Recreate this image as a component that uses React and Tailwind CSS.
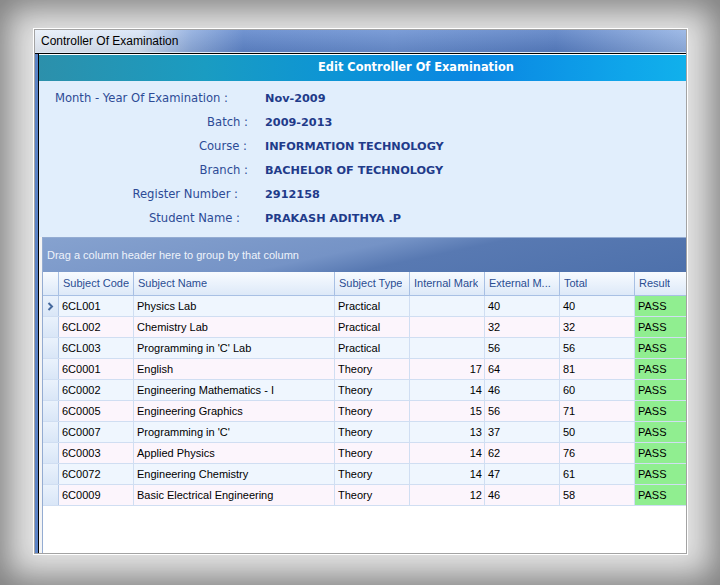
const info = [
  { label: "Month - Year Of Examination :", value: "Nov-2009", pr: "pr-[37px]" },
  { label: "Batch :", value: "2009-2013", pr: "pr-[17px]" },
  { label: "Course :", value: "INFORMATION TECHNOLOGY", pr: "pr-[18px]" },
  { label: "Branch :", value: "BACHELOR OF TECHNOLOGY", pr: "pr-[17px]" },
  { label: "Register Number :", value: "2912158", pr: "pr-[27px]" },
  { label: "Student Name :", value: "PRAKASH ADITHYA .P", pr: "pr-[25px]" },
];

const rows = [
  ["6CL001", "Physics Lab", "Practical", "", "40", "40"],
  ["6CL002", "Chemistry Lab", "Practical", "", "32", "32"],
  ["6CL003", "Programming in 'C' Lab", "Practical", "", "56", "56"],
  ["6C0001", "English", "Theory", "17", "64", "81"],
  ["6C0002", "Engineering Mathematics - I", "Theory", "14", "46", "60"],
  ["6C0005", "Engineering Graphics", "Theory", "15", "56", "71"],
  ["6C0007", "Programming in 'C'", "Theory", "13", "37", "50"],
  ["6C0003", "Applied Physics", "Theory", "14", "62", "76"],
  ["6C0072", "Engineering Chemistry", "Theory", "14", "47", "61"],
  ["6C0009", "Basic Electrical Engineering", "Theory", "12", "46", "58"],
];

const headers = ["Subject Code", "Subject Name", "Subject Type", "Internal Mark", "External Mark", "Total", "Result"];

const cols = "grid grid-cols-[16px_75px_201px_75px_75px_75px_75px_75px]";

function Chevron() {
  return (
    <svg width="7" height="9" viewBox="0 0 7 9">
      <path d="M1.5 1 L5 4.5 L1.5 8" stroke="#46699d" strokeWidth="2" fill="none" />
    </svg>
  );
}

export default function App() {
  return (
    <div className="w-[720px] h-[585px] bg-[#e3e3e3] shadow-[inset_0_0_32px_8px_rgba(0,0,0,0.45)] pt-[28px] pl-[33px] font-['Liberation_Sans',Arial,sans-serif]">
      <div className="w-[655px] h-[527px] border border-white">
        <div className="h-full border border-[#a3a3a3] flex flex-col overflow-hidden bg-white">
          {/* title bar */}
          <div className="h-[22px] shrink-0 flex items-center pl-[6px] text-[12px] text-black bg-[linear-gradient(to_bottom,rgba(255,255,255,0.12),rgba(0,0,0,0.08)),linear-gradient(to_right,#e9f0fa_0%,#d9e5f6_16%,#8eacde_24%,#5f86cb_32%,#6a90d2_55%,#587fc4_80%,#93b2e4_100%)]">
            Controller Of Examination
          </div>
          <div className="h-[2px] shrink-0 border-t border-[#dfe8f5] border-b border-b-black" />

          <div className="flex-1 flex min-h-0">
            <div className="w-[3px] shrink-0 bg-[#5a82c6]" />
            <div className="w-[1px] shrink-0 bg-black" />
            <div className="flex-1 min-w-0 overflow-hidden">
              <div className="w-[754px] h-full flex flex-col">
                {/* header */}
                <div className="mt-[1px] h-[26px] shrink-0 flex items-center justify-center text-[11.4px] font-bold text-white font-['DejaVu_Sans',Verdana,sans-serif] bg-[linear-gradient(to_right,#2c90ab_0%,#1a9cc2_22%,#0c94d6_40%,#0a86e2_58%,#0fa6ea_78%,#12b6ec_90%,#1ab4e0_100%)]">
                  Edit Controller Of Examination
                </div>

                {/* form */}
                <div className="h-[156px] shrink-0 bg-[#e1eefc] pt-[6px] font-['DejaVu_Sans',Verdana,sans-serif]">
                  {info.map((r) => (
                    <div key={r.label} className="h-[24px] flex items-center">
                      <div className={`w-[226px] text-right text-[11.6px] text-[#2d4b96] ${r.pr}`}>{r.label}</div>
                      <div className="font-bold text-[11.25px] text-[#1f3b8a]">{r.value}</div>
                    </div>
                  ))}
                </div>

                {/* grid */}
                <div className="flex-1 pl-[3px] bg-[#f4f4f4] flex flex-col">
                  <div className="flex-1 bg-white border-l border-t border-[#94acd2] flex flex-col">
                    <div className="h-[34px] shrink-0 flex items-center pl-[4px] text-[11px] text-[#eef3fb] bg-[linear-gradient(168deg,#86a2cf_0%,#7593c6_40%,#5879b2_52%,#4a6ea9_100%)]">
                      Drag a column header here to group by that column
                    </div>
                    <div className={`${cols} h-[24px] shrink-0 text-[11px] text-[#2a4d92] bg-[linear-gradient(to_bottom,#f8fbff,#dde9f8)] border-b border-[#a8c0e4]`}>
                      <div className="border-r border-[#a8c0e4]" />
                      {headers.map((h) => (
                        <div key={h} className="border-r border-[#a8c0e4] pl-[4px] flex items-center overflow-hidden whitespace-nowrap">
                          <span className="truncate">{h === "External Mark" ? "External M..." : h}</span>
                        </div>
                      ))}
                    </div>
                    {rows.map((r, i) => (
                      <div key={r[0]} className={`${cols} h-[21px] shrink-0 text-[11px] text-black border-b border-[#d0def2] ${i % 2 === 0 ? "bg-[#eff6fe]" : "bg-[#fcf5fc]"}`}>
                        <div className="border-r border-[#b7cbe8] bg-[linear-gradient(to_bottom,#eaf2fc,#d9e6f7)] flex items-center justify-center">
                          {i === 0 && <Chevron />}
                        </div>
                        {r.map((c, j) => (
                          <div key={j} className={`border-r border-[#d0def2] flex items-center ${j === 3 ? "justify-end pr-[2px]" : "pl-[3px]"}`}>
                            {c}
                          </div>
                        ))}
                        <div className="bg-[#90ee90] pl-[3px] flex items-center">PASS</div>
                      </div>
                    ))}
                  </div>
                </div>
              </div>
            </div>
          </div>
        </div>
      </div>
    </div>
  );
}
